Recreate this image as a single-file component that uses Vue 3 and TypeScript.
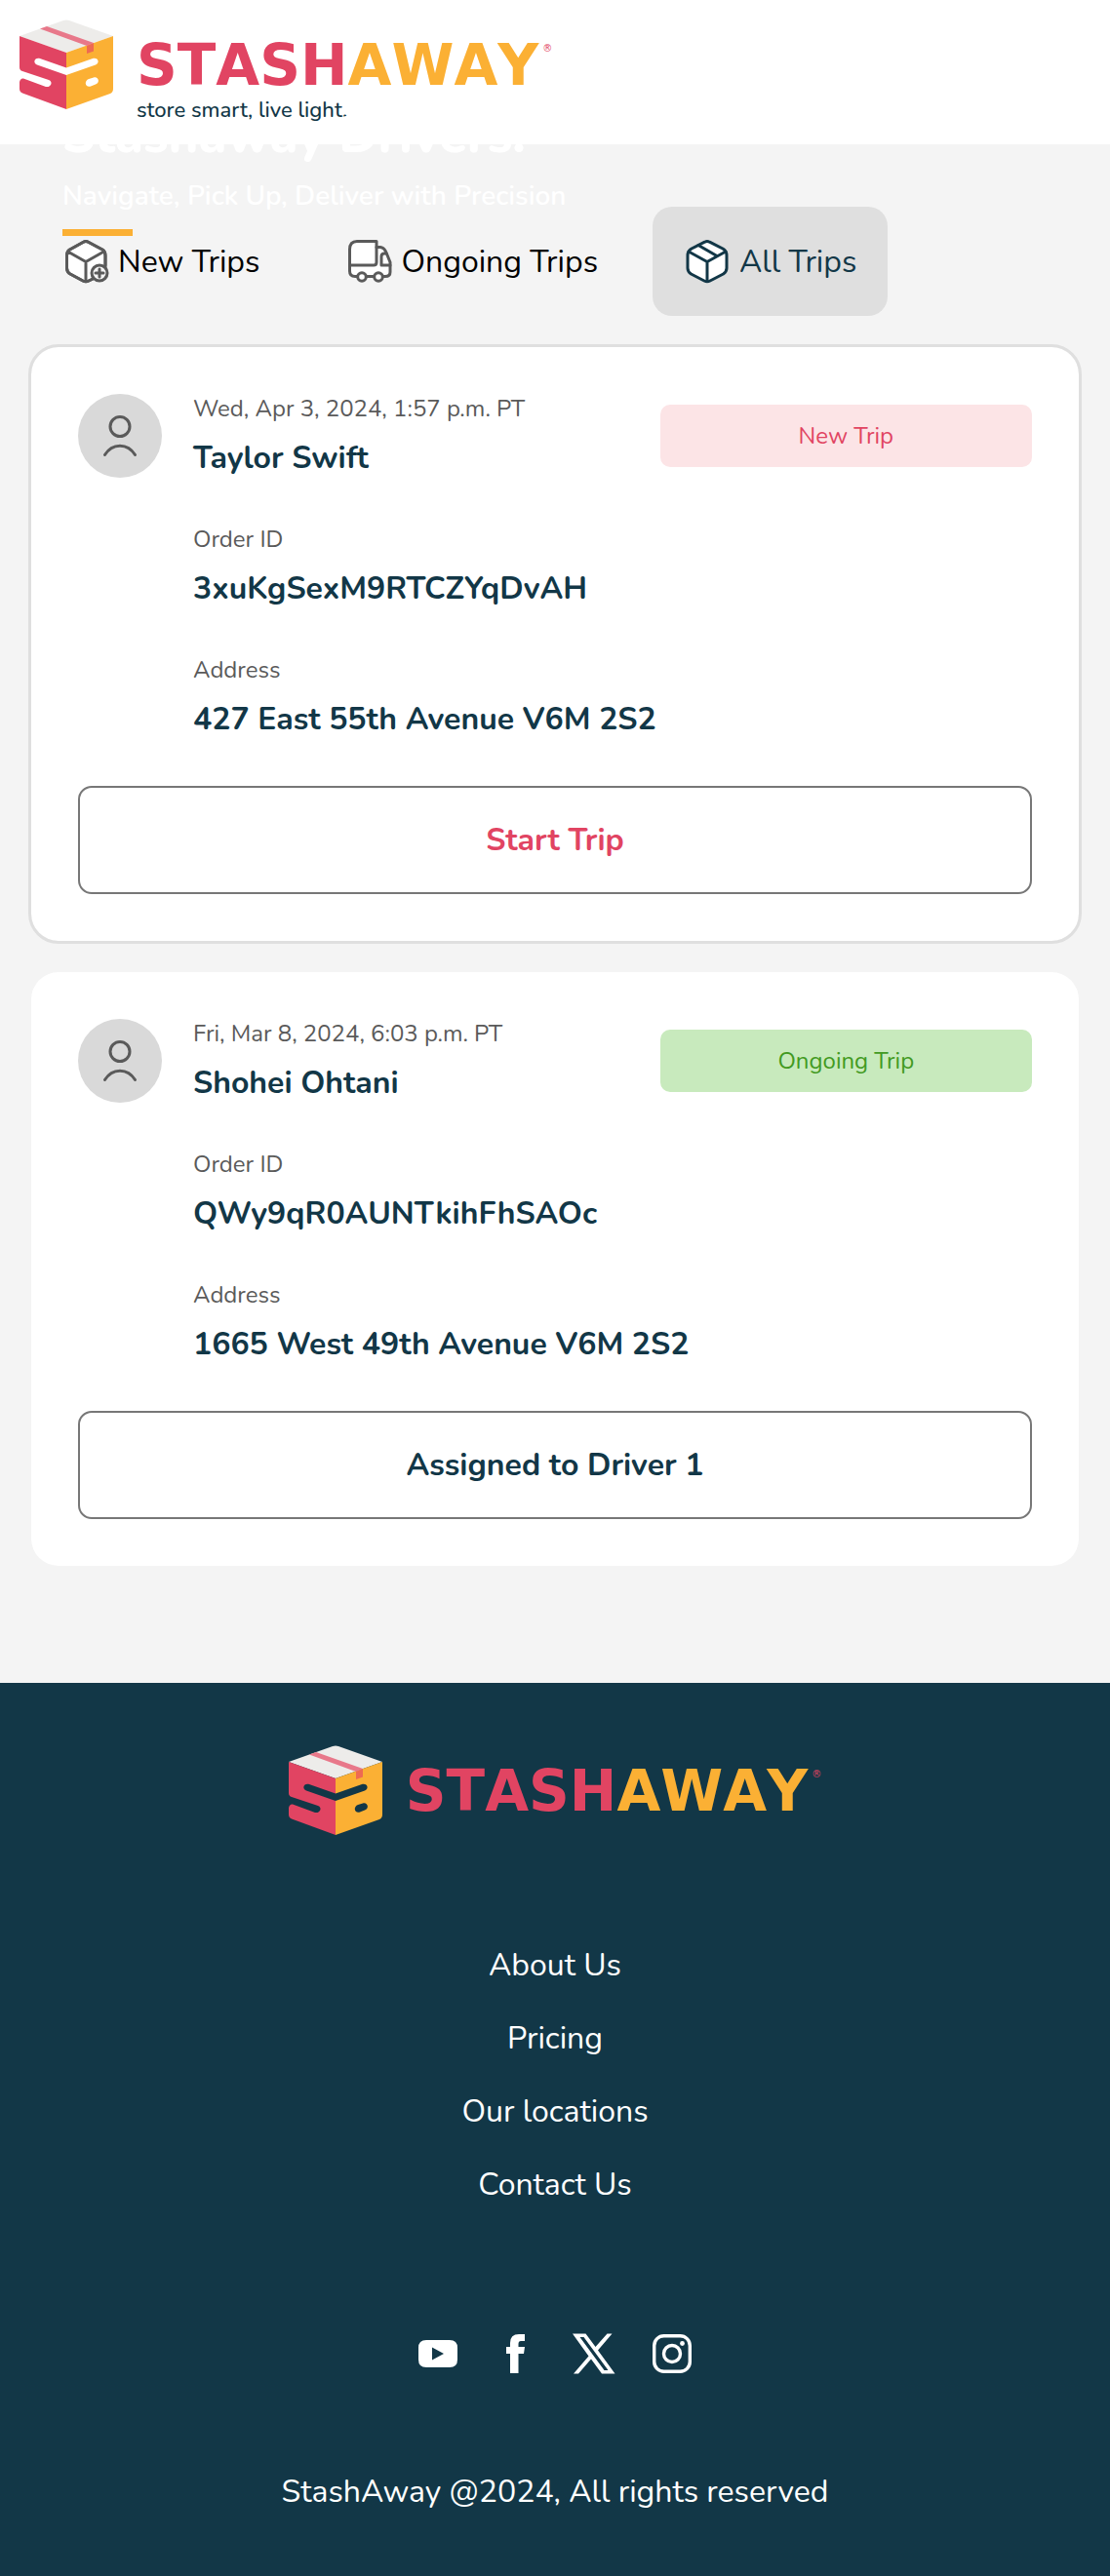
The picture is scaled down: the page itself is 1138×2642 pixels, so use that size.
<script setup lang="ts">
import { ref } from 'vue'

type TripStatus = 'new' | 'ongoing'
type TabKey = 'new' | 'ongoing' | 'all'

interface Trip {
  date: string
  customer: string
  orderId: string
  address: string
  status: TripStatus
  badge: string
  action: string
}

interface Tab {
  key: TabKey
  label: string
}

const tabs: Tab[] = [
  { key: 'new', label: 'New Trips' },
  { key: 'ongoing', label: 'Ongoing Trips' },
  { key: 'all', label: 'All Trips' },
]

const activeTab = ref<TabKey>('all')
const selectedTrip = ref<number>(0)

const trips: Trip[] = [
  {
    date: 'Wed, Apr 3, 2024, 1:57 p.m. PT',
    customer: 'Taylor Swift',
    orderId: '3xuKgSexM9RTCZYqDvAH',
    address: '427 East 55th Avenue V6M 2S2',
    status: 'new',
    badge: 'New Trip',
    action: 'Start Trip',
  },
  {
    date: 'Fri, Mar 8, 2024, 6:03 p.m. PT',
    customer: 'Shohei Ohtani',
    orderId: 'QWy9qR0AUNTkihFhSAOc',
    address: '1665 West 49th Avenue V6M 2S2',
    status: 'ongoing',
    badge: 'Ongoing Trip',
    action: 'Assigned to Driver 1',
  },
]

const footerLinks: string[] = ['About Us', 'Pricing', 'Our locations', 'Contact Us']
</script>

<template>
  <div class="page">
    <header class="header">
      <a class="brand" href="#" aria-label="StashAway home">
        <svg class="mark" viewBox="0 0 96 92" aria-hidden="true">
          <path fill="#edecea" d="M45 1Q48 0 51 1L96 17L48 34L0 17Z" />
          <path fill="#e14462" d="M0 17L48 34V49.500L21 40C15 38.500 13.500 45 18 46.500L48 57V92L3 75.500Q0 74 0 71V64Q1 60 4 60.500L27 69C32 70 35 64 30 62L3 53Q0 52 0 49Z" />
          <path fill="#fbb034" fill-rule="evenodd" d="M96 17L48 34V49.500L75 40C81 38.500 82.500 45 78 46.500L48 57V92L93 76Q96 74.500 96 71ZM71 61L76 59.500C81 58 83 65 78 66.500L73 68.500C67 70 66 63 71 61Z" />
          <path fill="#e8788a" d="M28 7L76 24L69 27L21 9.500Z" />
          <path fill="#ee6a52" d="M69 27L76 24V32.500L69 35Z" />
        </svg>
        <span class="brand-text">
          <span class="wordmark"><span class="stash">STASH</span><span class="away">AWAY</span><span class="reg">®</span></span>
          <span class="tagline">store smart, live light.</span>
        </span>
      </a>
      <div class="hero">
        <h1>Stashaway Drivers.</h1>
        <p>Navigate, Pick Up, Deliver with Precision</p>
        <span class="accent"></span>
      </div>
    </header>

    <main class="main">
      <nav class="tabs" aria-label="Trip filters">
        <button
          v-for="tab in tabs"
          :key="tab.key"
          type="button"
          class="tab"
          :class="{ active: tab.key === activeTab }"
          @click="activeTab = tab.key"
        >
          <svg v-if="tab.key === 'new'" class="tab-icon" viewBox="0 0 48 48" aria-hidden="true">
            <path fill="#fff" d="M21.500 4.200Q24 2.800 26.500 4.200L41 12Q44 14 44 18V32Q44 36 40 38L27 44Q24 45.500 21 44L8 37Q4.500 35 4.500 31V18Q4.500 14 7.500 12Z" />
            <path d="M44 28V18Q44 14 41 12L26.500 4.200Q24 2.800 21.500 4.200L7.500 12Q4.500 14 4.500 18V31Q4.500 35 8 37L21 44Q24 45.500 27 44L32 41.500M5.500 14L24 24.500L42.500 14M24 24.500V44.500" />
            <circle cx="38" cy="36" r="8" fill="#f4f4f4" />
            <path d="M38 32V40M34 36H42" />
          </svg>
          <svg v-else-if="tab.key === 'ongoing'" class="tab-icon" viewBox="0 0 48 48" aria-hidden="true">
            <path fill="#fff" d="M12 3.500H32V9.500H36Q40 10 42 15L46 25V35Q46 39.500 41 39.500H10Q4.500 39.500 4.500 34V12Q4.500 3.500 12 3.500Z" />
            <path d="M32 9.500V25Q32 28 29 28H4.500M42 16H40Q37 16 37 19V28H46" />
            <circle cx="17" cy="40" r="4.300" fill="#fff" />
            <circle cx="34" cy="40" r="4.300" fill="#fff" />
          </svg>
          <svg v-else class="tab-icon" viewBox="0 0 48 48" aria-hidden="true">
            <path fill="#fff" d="M21.500 4.200Q24 2.800 26.500 4.200L40 11Q44 13.500 44 18V31Q44 34.500 40.500 37L27 44Q24 45.500 21 44L7.500 37Q4 34.500 4 31V18Q4 13.500 8 11Z" />
            <path d="M5 14L24 24.500L43 14M24 24.500V44.500M15 7.500L34 18.500" />
          </svg>
          <span class="tab-label">{{ tab.label }}</span>
        </button>
      </nav>

      <article
        v-for="(trip, index) in trips"
        :key="trip.orderId"
        class="card"
        :class="{ selected: index === selectedTrip }"
        @click="selectedTrip = index"
      >
        <div class="card-head">
          <svg class="avatar" viewBox="0 0 86 86" aria-hidden="true">
            <circle class="disc" cx="43" cy="43" r="43" />
            <circle cx="43" cy="33.500" r="10" />
            <path d="M27.500 62.500C35 50 51 50 58.500 62.500" />
          </svg>
          <div class="field who">
            <span class="label">{{ trip.date }}</span>
            <strong class="value">{{ trip.customer }}</strong>
          </div>
          <span class="badge" :class="trip.status">{{ trip.badge }}</span>
        </div>
        <div class="field indented">
          <span class="label">Order ID</span>
          <strong class="value">{{ trip.orderId }}</strong>
        </div>
        <div class="field indented">
          <span class="label">Address</span>
          <strong class="value">{{ trip.address }}</strong>
        </div>
        <button type="button" class="action" :class="trip.status">{{ trip.action }}</button>
      </article>
    </main>

    <footer class="footer">
      <a class="brand" href="#" aria-label="StashAway home">
        <svg class="mark" viewBox="0 0 96 92" aria-hidden="true">
          <path fill="#edecea" d="M45 1Q48 0 51 1L96 17L48 34L0 17Z" />
          <path fill="#e14462" d="M0 17L48 34V49.500L21 40C15 38.500 13.500 45 18 46.500L48 57V92L3 75.500Q0 74 0 71V64Q1 60 4 60.500L27 69C32 70 35 64 30 62L3 53Q0 52 0 49Z" />
          <path fill="#fbb034" fill-rule="evenodd" d="M96 17L48 34V49.500L75 40C81 38.500 82.500 45 78 46.500L48 57V92L93 76Q96 74.500 96 71ZM71 61L76 59.500C81 58 83 65 78 66.500L73 68.500C67 70 66 63 71 61Z" />
          <path fill="#e8788a" d="M28 7L76 24L69 27L21 9.500Z" />
          <path fill="#ee6a52" d="M69 27L76 24V32.500L69 35Z" />
        </svg>
        <span class="brand-text">
          <span class="wordmark"><span class="stash">STASH</span><span class="away">AWAY</span><span class="reg">®</span></span>
        </span>
      </a>

      <nav class="links" aria-label="Footer">
        <a v-for="link in footerLinks" :key="link" href="#">{{ link }}</a>
      </nav>

      <div class="social">
        <a href="#" aria-label="YouTube">
          <svg viewBox="0 0 48 48"><path fill-rule="evenodd" d="M12 10H36Q44 10 44 18V30Q44 38 36 38H12Q4 38 4 30V18Q4 10 12 10ZM18 17.500V30.500L30 24Z" /></svg>
        </a>
        <a href="#" aria-label="Facebook">
          <svg viewBox="0 0 48 48"><path d="M18 44V24H14V17H18V13Q18 4 27 4H33V11H29Q26.500 11 26.500 14V17H33L32 24H26.500V44Z" /></svg>
        </a>
        <a href="#" aria-label="X">
          <svg viewBox="0 0 48 48"><path fill-rule="evenodd" d="M2 3.500H15.500L25.500 17L37.500 3.500H42.500L28 20.500L45.500 44.500H32L21 29.500L8 44.500H3L18.500 26.500ZM9.500 7L34.500 41H38.500L13.500 7Z" /></svg>
        </a>
        <a href="#" aria-label="Instagram">
          <svg viewBox="0 0 48 48">
            <rect class="line" x="5.700" y="5.700" width="36.600" height="36.600" rx="10" />
            <circle class="line" cx="24" cy="24" r="8.500" />
            <circle cx="34.500" cy="13.500" r="2.400" />
          </svg>
        </a>
      </div>

      <p class="copyright">StashAway @2024, All rights reserved</p>
    </footer>
  </div>
</template>

<style>
body {
  margin: 0;
  background: #f4f4f4;
}
</style>

<style scoped>
.page {
  font-family: Nunito, Lato, "Noto Sans", sans-serif;
  font-size: 32px;
  line-height: 44px;
  color: #123747;
  background: #f4f4f4;
}

.page *,
.page *::before {
  box-sizing: border-box;
}

button {
  font: inherit;
  cursor: pointer;
}

a {
  color: inherit;
  text-decoration: none;
}

.header {
  position: relative;
  height: 148px;
  padding: 20px;
  background: #fff;
}

.brand {
  display: inline-flex;
  gap: 24px;
  align-items: flex-start;
}

.mark {
  width: 96px;
  height: 92px;
}

.brand-text {
  display: flex;
  flex-direction: column;
  padding-top: 20px;
}

.wordmark {
  display: flex;
  font-family: "DejaVu Sans", sans-serif;
  font-size: 58px;
  font-weight: 700;
  font-kerning: none;
  line-height: 54px;
}

.stash {
  color: #e14462;
}

.away {
  color: #fbb034;
}

.reg {
  width: 14px;
  padding-left: 4px;
  font-size: 10px;
  font-weight: 400;
  line-height: 20px;
  color: #e14462;
}

.tagline {
  font-size: 22px;
  font-weight: 500;
  line-height: 38px;
}

.hero {
  position: absolute;
  top: 105px;
  left: 64px;
  color: #fff;
}

.hero h1 {
  margin: 0;
  font-size: 52px;
  font-weight: 800;
  line-height: 68px;
}

.hero p {
  margin: 8px 0 14px;
  font-size: 28px;
  font-weight: 600;
  line-height: 40px;
}

.accent {
  display: block;
  width: 72px;
  height: 7px;
  background: #fbb034;
}

.main {
  display: flex;
  flex-direction: column;
  gap: 32px;
  padding: 64px 32px 120px;
}

.tabs {
  display: flex;
  gap: 24px;
}

.tab {
  display: flex;
  gap: 9px;
  align-items: center;
  height: 112px;
  padding: 0 32px;
  border: 0;
  border-radius: 20px;
  background: transparent;
  color: #000;
}

.tab.active {
  background: #dfdfdf;
  color: #123747;
}

.tab-label {
  padding-top: 2px;
}

.tab-icon {
  width: 48px;
  height: 48px;
  fill: none;
  stroke: #5a5a5a;
  stroke-width: 3;
  stroke-linecap: round;
  stroke-linejoin: round;
}

.tab.active .tab-icon {
  stroke: #123747;
}

.card {
  display: flex;
  flex-direction: column;
  gap: 46px;
  padding: 48px;
  border-radius: 28px;
  background: #fff;
}

.card.selected {
  outline: 3px solid #dfdfdf;
}

.card-head {
  display: flex;
  gap: 32px;
  align-items: flex-start;
}

.avatar {
  flex: none;
  width: 86px;
  height: 86px;
  fill: none;
  stroke: #5a5a5a;
  stroke-width: 3;
  stroke-linecap: round;
}

.disc {
  fill: #d9d9d9;
  stroke: none;
}

.field {
  display: flex;
  flex-direction: column;
  gap: 14px;
}

.who {
  flex: 1;
}

.indented {
  padding-left: 118px;
}

.label {
  font-size: 24px;
  line-height: 30px;
  color: #5a5a5a;
}

.value {
  font-weight: 700;
}

.badge {
  flex: 0 0 39%;
  margin-top: 11px;
  border-radius: 10px;
  font-size: 24px;
  line-height: 64px;
  text-align: center;
}

.badge.new {
  background: #fce4e6;
  color: #e14462;
}

.badge.ongoing {
  background: #c8eabd;
  color: #429a22;
}

.action {
  height: 111px;
  border: 2px solid #777;
  border-radius: 14px;
  background: #fff;
  font-weight: 700;
  color: #123747;
}

.action.new {
  color: #e14462;
}

.footer {
  display: flex;
  flex-direction: column;
  align-items: center;
  padding: 64px 32px;
  background: #123747;
  color: #fff;
}

.links {
  display: flex;
  flex-direction: column;
  gap: 31px;
  align-items: center;
  margin-top: 112px;
}

.social {
  display: flex;
  gap: 32px;
  margin-top: 127px;
}

.social a {
  display: flex;
}

.social svg {
  width: 48px;
  height: 48px;
  fill: #fff;
}

.social .line {
  fill: none;
  stroke: #fff;
  stroke-width: 3.400;
}

.copyright {
  margin: 96px 0 0;
}
</style>
